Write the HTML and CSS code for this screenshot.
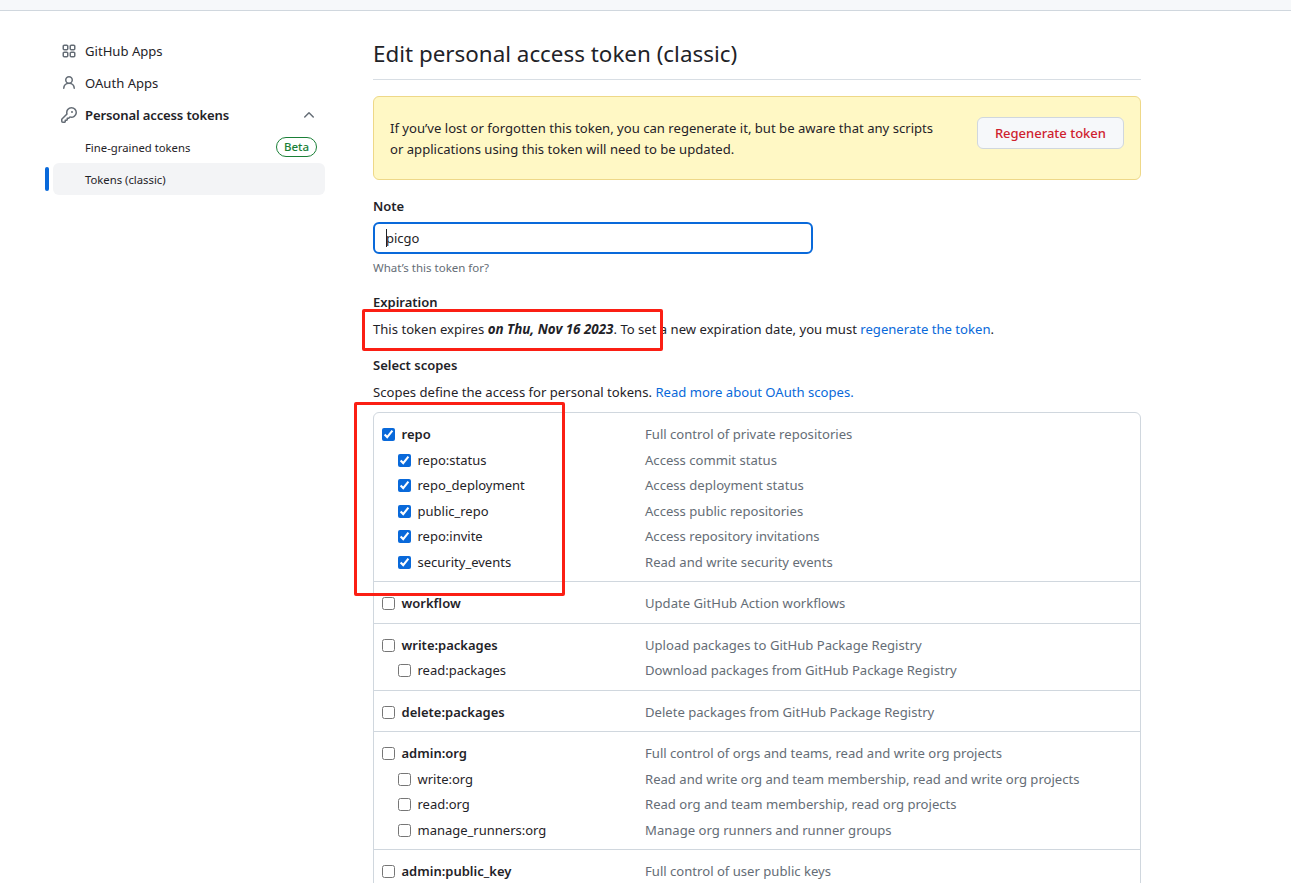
FILE: index.html
```html
<!DOCTYPE html>
<html lang="en">
<head>
    <meta charset="UTF-8">
    <meta name="viewport" content="width=device-width, initial-scale=1.0">
    <title>Edit personal access token (classic)</title>
    <link rel="stylesheet" href="styles.css">
</head>
<body>
    <div class="topbar"></div>
    <div class="page">
        <nav class="sidebar">
            <a class="nav-item"><svg class="nav-icon" viewBox="0 0 16 16" width="16" height="16"><path d="M1.5 3.25c0-.966.784-1.75 1.75-1.75h2.5c.966 0 1.75.784 1.75 1.75v2.5A1.75 1.75 0 0 1 5.75 7.5h-2.5A1.75 1.75 0 0 1 1.5 5.75Zm7 0c0-.966.784-1.75 1.75-1.75h2.5c.966 0 1.75.784 1.75 1.75v2.5a1.75 1.75 0 0 1-1.75 1.75h-2.5A1.75 1.75 0 0 1 8.5 5.75Zm-7 7c0-.966.784-1.75 1.75-1.75h2.5c.966 0 1.75.784 1.75 1.75v2.5a1.75 1.75 0 0 1-1.75 1.75h-2.5a1.75 1.75 0 0 1-1.75-1.75Zm7 0c0-.966.784-1.75 1.75-1.75h2.5c.966 0 1.75.784 1.75 1.75v2.5a1.75 1.75 0 0 1-1.75 1.75h-2.5a1.75 1.75 0 0 1-1.75-1.75ZM3.25 3a.25.25 0 0 0-.25.25v2.5c0 .138.112.25.25.25h2.5A.25.25 0 0 0 6 5.75v-2.5A.25.25 0 0 0 5.75 3Zm7 0a.25.25 0 0 0-.25.25v2.5c0 .138.112.25.25.25h2.5a.25.25 0 0 0 .25-.25v-2.5a.25.25 0 0 0-.25-.25ZM3 10.25v2.5c0 .138.112.25.25.25h2.5a.25.25 0 0 0 .25-.25v-2.5a.25.25 0 0 0-.25-.25h-2.5a.25.25 0 0 0-.25.25Zm7.25-.25a.25.25 0 0 0-.25.25v2.5c0 .138.112.25.25.25h2.5a.25.25 0 0 0 .25-.25v-2.5a.25.25 0 0 0-.25-.25Z"/></svg>GitHub Apps</a>
            <a class="nav-item"><svg class="nav-icon" viewBox="0 0 16 16" width="16" height="16"><path d="M10.561 8.073a6.005 6.005 0 0 1 3.432 5.142.75.75 0 1 1-1.498.07 4.5 4.5 0 0 0-8.99 0 .75.75 0 1 1-1.498-.07 6.004 6.004 0 0 1 3.431-5.142 3.999 3.999 0 1 1 5.123 0ZM10.5 5a2.5 2.5 0 1 0-5 0 2.5 2.5 0 0 0 5 0Z"/></svg>OAuth Apps</a>
            <a class="nav-item nav-open"><svg class="nav-icon" viewBox="0 0 16 16" width="16" height="16"><path d="M10.5 0a5.499 5.499 0 1 1-1.288 10.848l-.932.932a.749.749 0 0 1-.53.22H7v.75a.749.749 0 0 1-.22.53l-.5.5a.749.749 0 0 1-.53.22H5v.75a.749.749 0 0 1-.22.53l-.5.5a.749.749 0 0 1-.53.22h-2A1.75 1.75 0 0 1 0 14.25v-2c0-.199.079-.389.22-.53l4.932-4.932A5.5 5.5 0 0 1 10.5 0Zm-4 5.5c-.001.431.069.86.205 1.269a.75.75 0 0 1-.181.768L1.5 12.56v1.69c0 .138.112.25.25.25h1.69l.06-.06v-1.19a.75.75 0 0 1 .75-.75h1.19l.06-.06v-1.19a.75.75 0 0 1 .75-.75h1.19l1.023-1.025a.75.75 0 0 1 .768-.18A4 4 0 1 0 6.5 5.5ZM11 6a1 1 0 1 1 0-2 1 1 0 0 1 0 2Z"/></svg><span class="nav-grow">Personal access tokens</span><svg class="nav-icon chevron" viewBox="0 0 16 16" width="16" height="16"><path d="M3.22 10.53a.749.749 0 0 1 0-1.06l4.25-4.25a.749.749 0 0 1 1.06 0l4.25 4.25a.749.749 0 1 1-1.06 1.06L8 6.811 4.28 10.53a.749.749 0 0 1-1.06 0Z"/></svg></a>
            <a class="nav-item nav-sub"><span class="nav-grow">Fine-grained tokens</span><span class="beta">Beta</span></a>
            <a class="nav-item nav-sub nav-current">Tokens (classic)</a>
        </nav>

        <main class="content">
            <h1 class="page-title">Edit personal access token (classic)</h1>

            <div class="flash">
                <p>If you’ve lost or forgotten this token, you can regenerate it, but be aware that any scripts or applications using this token will need to be updated.</p>
                <button class="btn-danger" type="button">Regenerate token</button>
            </div>

            <label class="field-label" for="note">Note</label>
            <div class="note-wrap">
                <input class="note-input" id="note" type="text" value="picgo">
                <span class="caret"></span>
            </div>
            <p class="hint">What’s this token for?</p>

            <div class="field-label expiration-label">Expiration</div>
            <p class="expiry">This token expires <em>on Thu, Nov 16 2023</em>. To set a new expiration date, you must <a href="#">regenerate the token</a>.</p>

            <div class="field-label scopes-label">Select scopes</div>
            <p class="scopes-intro">Scopes define the access for personal tokens. <a href="#">Read more about OAuth scopes.</a></p>

            <div class="scopes">
                <div class="scope-group">
                    <label class="scope top"><input type="checkbox" checked><b>repo</b><span>Full control of private repositories</span></label>
                    <label class="scope"><input type="checkbox" checked><i>repo:status</i><span>Access commit status</span></label>
                    <label class="scope"><input type="checkbox" checked><i>repo_deployment</i><span>Access deployment status</span></label>
                    <label class="scope"><input type="checkbox" checked><i>public_repo</i><span>Access public repositories</span></label>
                    <label class="scope"><input type="checkbox" checked><i>repo:invite</i><span>Access repository invitations</span></label>
                    <label class="scope"><input type="checkbox" checked><i>security_events</i><span>Read and write security events</span></label>
                </div>
                <div class="scope-group">
                    <label class="scope top"><input type="checkbox"><b>workflow</b><span>Update GitHub Action workflows</span></label>
                </div>
                <div class="scope-group">
                    <label class="scope top"><input type="checkbox"><b>write:packages</b><span>Upload packages to GitHub Package Registry</span></label>
                    <label class="scope"><input type="checkbox"><i>read:packages</i><span>Download packages from GitHub Package Registry</span></label>
                </div>
                <div class="scope-group">
                    <label class="scope top"><input type="checkbox"><b>delete:packages</b><span>Delete packages from GitHub Package Registry</span></label>
                </div>
                <div class="scope-group">
                    <label class="scope top"><input type="checkbox"><b>admin:org</b><span>Full control of orgs and teams, read and write org projects</span></label>
                    <label class="scope"><input type="checkbox"><i>write:org</i><span>Read and write org and team membership, read and write org projects</span></label>
                    <label class="scope"><input type="checkbox"><i>read:org</i><span>Read org and team membership, read org projects</span></label>
                    <label class="scope"><input type="checkbox"><i>manage_runners:org</i><span>Manage org runners and runner groups</span></label>
                </div>
                <div class="scope-group">
                    <label class="scope top"><input type="checkbox"><b>admin:public_key</b><span>Full control of user public keys</span></label>
                </div>
            </div>
        </main>
    </div>

    <!-- red boxes someone drew on top of the screenshot -->
    <div class="mark mark-expiry"></div>
    <div class="mark mark-repo"></div>
</body>
</html>
```

FILE: styles.css
```css
html, body { height: 883px; overflow: hidden; }
body { margin: 0; font-family: "Noto Sans", "Open Sans", sans-serif; font-size: 13.1px; line-height: 21px; color: #1f2328; background-color: #fff; position: relative; }
p { margin: 0; }
a { color: #0969da; text-decoration: none; }

.topbar { height: 10px; background-color: #f6f8fa; border-bottom: 1px solid #d0d7de; }
.page { display: flex; align-items: flex-start; padding: 24px 0 0 45px; }

/* sidebar */
.sidebar { width: 280px; margin-right: 48px; flex-shrink: 0; }
.nav-item { display: flex; align-items: center; height: 32px; margin-left: 8px; padding: 0 8px; border-radius: 6px; color: #1f2328; position: relative; }
.nav-icon { fill: #656d76; margin-right: 8px; flex-shrink: 0; }
.nav-grow { flex: 1; }
.nav-open { font-weight: 600; letter-spacing: -0.15px; }
.chevron { margin-right: 0; }
.nav-sub { font-size: 11.3px; padding-left: 32px; }
.nav-current { background-color: #f3f4f6; }
.nav-current::before { content: ""; position: absolute; left: -8px; top: 4px; width: 4px; height: 24px; border-radius: 6px; background-color: #0969da; }
.beta { border: 1px solid #1a7f37; border-radius: 10px; color: #1a7f37; font-size: 11.5px; font-weight: 500; line-height: 18px; padding: 0 7px; }

/* main column */
.content { width: 768px; }
.page-title { margin: 0; padding: 1px 0 7px; border-bottom: 1px solid #d8dee4; font-size: 22.4px; font-weight: 400; line-height: 36px; }

.flash { display: flex; align-items: flex-start; justify-content: space-between; height: 84px; box-sizing: border-box; margin-top: 16px; padding: 20px 16px; background-color: #fff8c5; border: 1px solid #eed888; border-radius: 6px; }
.flash p { width: 550px; padding-top: 1px; }
.btn-danger { height: 32px; padding: 0 17px; background-color: #f6f8fa; border: 1px solid #d0d7de; border-radius: 6px; color: #cf222e; font-family: inherit; font-size: 13px; font-weight: 500; }

.field-label { display: block; font-weight: 600; font-size: 13px; }
label.field-label { margin-top: 16px; }
.note-wrap { position: relative; width: 440px; margin-top: 5px; }
.note-input { display: block; width: 100%; height: 32px; box-sizing: border-box; padding: 0 11px; border: 2px solid #0969da; border-radius: 6px; font-family: inherit; font-size: 13px; color: #1f2328; outline: none; }
.caret { position: absolute; left: 13px; top: 7px; width: 1px; height: 18px; background-color: #1f2328; }
.hint { margin-top: 3px; font-size: 11.5px; color: #656d76; }

.expiration-label { margin-top: 14px; }
.expiry { margin-top: 6px; }
.expiry em { font-weight: 700; font-size: 13.4px; }
.scopes-label { margin-top: 15px; }
.scopes-intro { margin-top: 6px; }

/* scope table */
.scopes { margin-top: 9px; border: 1px solid #d0d7de; border-radius: 6px; font-size: 13.1px; }
.scope-group { padding: 8.5px 0 6.5px; border-top: 1px solid #d0d7de; }
.scope-group:first-child { border-top: none; padding: 9px 0 6.25px; }
.scope { display: flex; align-items: center; height: 25.5px; padding-left: 24px; }
.scope input { width: 13px; height: 13px; margin: 0 6.5px 0 0; accent-color: #0969da; flex-shrink: 0; }
.scope.top { padding-left: 8px; }
.scope b { width: 243.5px; font-weight: 600; font-size: 13px; }
.scope i { width: 227.5px; font-style: normal; font-size: 13px; }
.scope span { color: #656d76; }

/* annotations over the page */
.mark { position: absolute; border: 3px solid #fb1f14; border-radius: 2px; box-sizing: border-box; }
.mark-expiry { left: 362px; top: 309px; width: 301px; height: 42px; }
.mark-repo { left: 354px; top: 402px; width: 211px; height: 194px; }
```
